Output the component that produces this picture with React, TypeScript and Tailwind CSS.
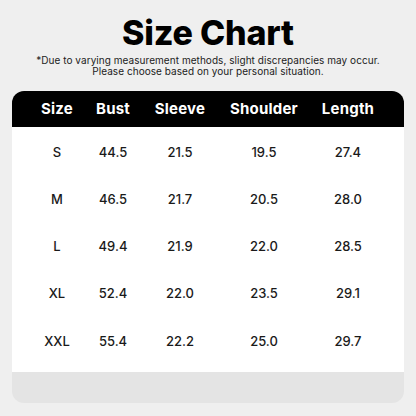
import React from 'react';

interface SizeRow {
    size: string;
    bust: string;
    sleeve: string;
    shoulder: string;
    length: string;
}

const rows: SizeRow[] = [
    { size: 'S', bust: '44.5', sleeve: '21.5', shoulder: '19.5', length: '27.4' },
    { size: 'M', bust: '46.5', sleeve: '21.7', shoulder: '20.5', length: '28.0' },
    { size: 'L', bust: '49.4', sleeve: '21.9', shoulder: '22.0', length: '28.5' },
    { size: 'XL', bust: '52.4', sleeve: '22.0', shoulder: '23.5', length: '29.1' },
    { size: 'XXL', bust: '55.4', sleeve: '22.2', shoulder: '25.0', length: '29.7' },
];

const headers = ['Size', 'Bust', 'Sleeve', 'Shoulder', 'Length'];

// column widths tuned so centers line up with the chart
const gridCols = 'grid grid-cols-[56px_56px_78px_90px_78px] px-[17px]';

const App: React.FC = () => {
    return (
        <div className="w-[416px] h-[416px] bg-[#efefef] flex flex-col items-center font-['Inter','Liberation_Sans',sans-serif] text-[#111]">
            {/* Title */}
            <h1 className="mt-[13px] text-[34px] leading-[40px] font-extrabold tracking-[-0.2px] text-black">Size Chart</h1>
            <p className="mt-[2px] text-[10px] leading-[11px] tracking-[0.05px] text-center text-[#222]">
                *Due to varying measurement methods, slight discrepancies may occur.
                <br />
                Please choose based on your personal situation.
            </p>

            {/* Table card */}
            <div className="mt-[14px] w-[392px] rounded-[12px] overflow-hidden">
                <div className={`${gridCols} h-[36px] items-center bg-black text-white text-[15px] font-bold tracking-[0.2px]`}>
                    {headers.map(h => (
                        <div key={h} className="text-center">{h}</div>
                    ))}
                </div>
                <div className="bg-white pt-[2px] pb-[7px]">
                    {rows.map(r => (
                        <div key={r.size} className={`${gridCols} h-[47.2px] items-center text-[13px] font-medium text-[#1a1a1a]`}>
                            <div className="text-center">{r.size}</div>
                            <div className="text-center">{r.bust}</div>
                            <div className="text-center">{r.sleeve}</div>
                            <div className="text-center">{r.shoulder}</div>
                            <div className="text-center">{r.length}</div>
                        </div>
                    ))}
                </div>
                <div className="h-[31px] bg-[#e4e4e4]" />
            </div>
        </div>
    );
};

export default App;
